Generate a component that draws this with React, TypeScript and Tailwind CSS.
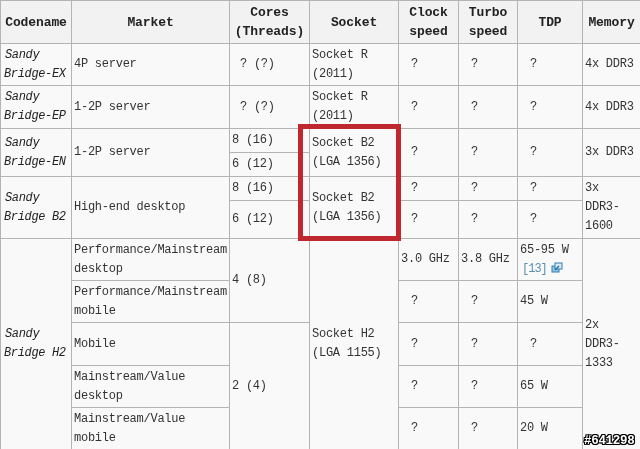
const td = "border border-[#b4b4b4] align-middle p-0 overflow-hidden";
const Q = () => <span className="pl-[10px]">?</span>;

function Cell({ children, rowSpan, className = "" }: { children?: React.ReactNode; rowSpan?: number; className?: string }) {
  return (
    <td rowSpan={rowSpan} className={`${td} pl-[2px] whitespace-nowrap ${className}`}>
      {children}
    </td>
  );
}

function Name({ a, b }: { a: string; b: string }) {
  return (
    <div className="italic text-[12px] tracking-[-0.35px] pl-[1px] text-[#222]">
      <div className="pl-[1px]">{a}</div>
      <div>{b}</div>
    </div>
  );
}

function Head({ children }: { children: React.ReactNode }) {
  return <th className={`${td} bg-[#f2f2f2] font-bold text-[13px] tracking-[-0.1px] text-center text-[#222] leading-[19px]`}>{children}</th>;
}

function Two({ a, b }: { a: string; b: string }) {
  return (
    <>
      {a}
      <br />
      {b}
    </>
  );
}

function Ext() {
  return (
    <svg width="12" height="11" viewBox="0 0 12 11" className="inline-block ml-[4px] align-[-1px]">
      <rect x="1" y="4" width="7" height="6" fill="#9cc4e0" stroke="#2f7fb5" />
      <rect x="4" y="1" width="7" height="6" fill="#d8e9f4" stroke="#2f7fb5" />
      <path d="M4 8 L8 4" stroke="#1f6ea8" strokeWidth="1.5" />
    </svg>
  );
}

export default function App() {
  return (
    <div className="relative w-[640px] h-[449px] overflow-hidden bg-[#f9f9f9] font-['Liberation_Mono','DejaVu_Sans_Mono',monospace] text-[12px] tracking-[-0.25px] leading-[19px] text-[#333] blur-[0.3px]">
      <table className="table-fixed border-collapse w-[640px]">
        <colgroup>
          <col className="w-[71px]" />
          <col className="w-[158px]" />
          <col className="w-[80px]" />
          <col className="w-[89px]" />
          <col className="w-[60px]" />
          <col className="w-[59px]" />
          <col className="w-[65px]" />
          <col className="w-[58px]" />
        </colgroup>
        <tbody>
          <tr className="h-[43px]">
            <Head>Codename</Head>
            <Head>Market</Head>
            <Head><Two a="Cores" b="(Threads)" /></Head>
            <Head>Socket</Head>
            <Head><Two a="Clock" b="speed" /></Head>
            <Head><Two a="Turbo" b="speed" /></Head>
            <Head>TDP</Head>
            <Head>Memory</Head>
          </tr>
          <tr className="h-[42px]">
            <Cell><Name a="Sandy" b="Bridge-EX" /></Cell>
            <Cell>4P server</Cell>
            <Cell><span className="pl-[8px]">? (?)</span></Cell>
            <Cell><Two a="Socket R" b="(2011)" /></Cell>
            <Cell><Q /></Cell>
            <Cell><Q /></Cell>
            <Cell><Q /></Cell>
            <Cell>4x DDR3</Cell>
          </tr>
          <tr className="h-[43px]">
            <Cell><Name a="Sandy" b="Bridge-EP" /></Cell>
            <Cell>1-2P server</Cell>
            <Cell><span className="pl-[8px]">? (?)</span></Cell>
            <Cell><Two a="Socket R" b="(2011)" /></Cell>
            <Cell><Q /></Cell>
            <Cell><Q /></Cell>
            <Cell><Q /></Cell>
            <Cell>4x DDR3</Cell>
          </tr>
          <tr className="h-[24px]">
            <Cell rowSpan={2}><Name a="Sandy" b="Bridge-EN" /></Cell>
            <Cell rowSpan={2}>1-2P server</Cell>
            <Cell>8 (16)</Cell>
            <Cell rowSpan={2}><Two a="Socket B2" b="(LGA 1356)" /></Cell>
            <Cell rowSpan={2}><Q /></Cell>
            <Cell rowSpan={2}><Q /></Cell>
            <Cell rowSpan={2}><Q /></Cell>
            <Cell rowSpan={2}>3x DDR3</Cell>
          </tr>
          <tr className="h-[24px]">
            <Cell>6 (12)</Cell>
          </tr>
          <tr className="h-[24px]">
            <Cell rowSpan={2}><Name a="Sandy" b="Bridge B2" /></Cell>
            <Cell rowSpan={2}>High-end desktop</Cell>
            <Cell>8 (16)</Cell>
            <Cell rowSpan={2}><Two a="Socket B2" b="(LGA 1356)" /></Cell>
            <Cell><Q /></Cell>
            <Cell><Q /></Cell>
            <Cell><Q /></Cell>
            <Cell rowSpan={2}>3x<br />DDR3-<br />1600</Cell>
          </tr>
          <tr className="h-[38px]">
            <Cell>6 (12)</Cell>
            <Cell><Q /></Cell>
            <Cell><Q /></Cell>
            <Cell><Q /></Cell>
          </tr>
          <tr className="h-[42px]">
            <Cell rowSpan={5}><Name a="Sandy" b="Bridge H2" /></Cell>
            <Cell><Two a="Performance/Mainstream" b="desktop" /></Cell>
            <Cell rowSpan={2}>4 (8)</Cell>
            <Cell rowSpan={5}><Two a="Socket H2" b="(LGA 1155)" /></Cell>
            <Cell>3.0 GHz</Cell>
            <Cell>3.8 GHz</Cell>
            <Cell>65-95 W<br /><span className="text-[#5b8fb0] text-[12px] tracking-[-1px] pl-[2px]">[13]</span><Ext /></Cell>
            <Cell rowSpan={5}>2x<br />DDR3-<br />1333</Cell>
          </tr>
          <tr className="h-[42px]">
            <Cell><Two a="Performance/Mainstream" b="mobile" /></Cell>
            <Cell><Q /></Cell>
            <Cell><Q /></Cell>
            <Cell>45 W</Cell>
          </tr>
          <tr className="h-[43px]">
            <Cell>Mobile</Cell>
            <Cell rowSpan={3}>2 (4)</Cell>
            <Cell><Q /></Cell>
            <Cell><Q /></Cell>
            <Cell><Q /></Cell>
          </tr>
          <tr className="h-[42px]">
            <Cell><Two a="Mainstream/Value" b="desktop" /></Cell>
            <Cell><Q /></Cell>
            <Cell><Q /></Cell>
            <Cell>65 W</Cell>
          </tr>
          <tr className="h-[42px]">
            <Cell><Two a="Mainstream/Value" b="mobile" /></Cell>
            <Cell><Q /></Cell>
            <Cell><Q /></Cell>
            <Cell>20 W</Cell>
          </tr>
        </tbody>
      </table>
      <div className="absolute left-[298px] top-[124px] w-[103px] h-[117px] border-[5px] border-[#c0272f]" />
      <div className="absolute left-[584px] top-[432px] text-[12.5px] tracking-[-0.3px] font-bold text-white [text-shadow:1px_0_0_#000,-1px_0_0_#000,0_1px_0_#000,0_-1px_0_#000,1px_1px_0_#000,-1px_-1px_0_#000,1px_-1px_0_#000,-1px_1px_0_#000]">
        #641298
      </div>
    </div>
  );
}
